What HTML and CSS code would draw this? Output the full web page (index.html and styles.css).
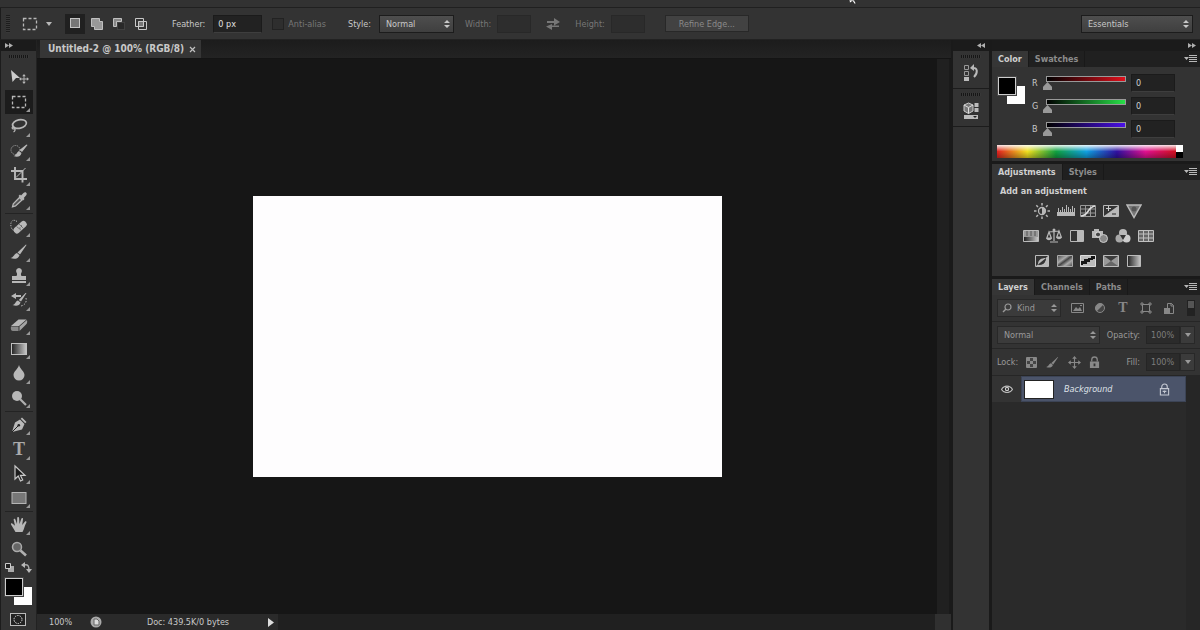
FILE: index.html
```html
<!DOCTYPE html>
<html lang="en">
<head>
<meta charset="utf-8">
<title>Untitled-2 @ 100% (RGB/8)</title>
<link rel="stylesheet" href="styles.css">
</head>
<body>
<svg class="defs" aria-hidden="true">
  <defs>
    <linearGradient id="fade" x1="0" y1="0" x2="1" y2="0"><stop offset="0" stop-color="#222"/><stop offset="1" stop-color="#c8c8c8"/></linearGradient>
    <linearGradient id="fadeDiag" x1="0" y1="0" x2="1" y2="1"><stop offset="0" stop-color="#444"/><stop offset=".35" stop-color="#aaa"/><stop offset=".5" stop-color="#444"/><stop offset=".7" stop-color="#aaa"/><stop offset="1" stop-color="#444"/></linearGradient>
    <symbol id="updown" viewBox="0 0 6 8"><path d="M3 0 6 3H0zM3 8 0 5h6z"/></symbol>
    <symbol id="menu" viewBox="0 0 13 8"><path d="M0 2h5L2.500 5zM5 0h8v1H5zM5 2h8v1H5zM5 4h8v1H5zM5 6h8v1H5z"/></symbol>
    <symbol id="right2" viewBox="0 0 8 5"><path d="M0 0 4 2.500 0 5zM4 0 8 2.500 4 5z"/></symbol>
    <symbol id="left2" viewBox="0 0 8 5"><path d="M4 0 0 2.500 4 5zM8 0 4 2.500 8 5z"/></symbol>
    <symbol id="down" viewBox="0 0 6 4"><path d="M0 0h6L3 4z"/></symbol>
    <symbol id="marquee" viewBox="0 0 20 20"><rect x="3.500" y="4.500" width="13" height="11" fill="none" stroke="currentColor" stroke-width="1.300" stroke-dasharray="3 2"/></symbol>
    <symbol id="brush" viewBox="0 0 20 20"><path d="M17.500 3 11 12.500 8.500 10.500 17 2.500zM8 11l2.500 2.200C9.500 17 5 17.500 1.500 16 5 15.500 5 11.500 8 11z"/></symbol>
    <symbol id="fourway" viewBox="0 0 14 14"><path d="M7 0 9.500 3H7.600v3.400H11V4.500L14 7l-3 2.500V7.600H7.600V11h1.900L7 14 4.500 11h1.900V7.600H3v1.900L0 7l3-2.500v1.900h3.400V3H4.500z"/></symbol>
    <symbol id="lock" viewBox="0 0 12 14"><path d="M3 6V4a3 3 0 0 1 6 0v2" fill="none" stroke="currentColor" stroke-width="1.400"/><path d="M1 6h10v7H1zM5 8v3h2V8z" fill-rule="evenodd"/></symbol>
  </defs>
</svg>

<div class="menubar"></div>
<svg class="cursor" viewBox="0 0 9 4" aria-hidden="true"><path d="M1 0h5l2 3.500-1.500.5L4.500 1 2 3z" fill="#fff" stroke="#111" stroke-width=".5"/></svg>

<header class="options">
  <span class="grip"></span>
  <button class="preset" aria-label="Rectangular marquee tool"><svg width="20" height="20"><use href="#marquee"/></svg><svg width="6" height="4"><use href="#down"/></svg></button>
  <div class="modes">
    <button class="mode active" aria-label="New selection"><svg width="14" height="14" viewBox="0 0 14 14"><rect x="2.500" y="1.500" width="9" height="9" fill="#777" stroke="#c4c4c4"/></svg></button>
    <button class="mode" aria-label="Add to selection"><svg width="14" height="14" viewBox="0 0 14 14"><path d="M1.500 1.500h8v3h3v8h-8v-3h-3z" fill="#999" stroke="#c0c0c0"/></svg></button>
    <button class="mode" aria-label="Subtract from selection"><svg width="14" height="14" viewBox="0 0 14 14"><path d="M1.500 1.500h8v3h-5v5h-3z" fill="#888" stroke="#c0c0c0"/><rect x="5.500" y="5.500" width="7" height="7" fill="#292929" stroke="#555" stroke-dasharray="1 1"/></svg></button>
    <button class="mode" aria-label="Intersect with selection"><svg width="14" height="14" viewBox="0 0 14 14"><path d="M4 4h6v6H4z" fill="#777"/><path d="M1.500 1.500h8v8h-8zM4.500 4.500h8v8h-8z" fill="none" stroke="#c8c8c8"/></svg></button>
  </div>
  <label class="field feather">Feather: <input class="box" type="text" value="0 px"></label>
  <label class="check"><input type="checkbox" disabled> Anti-alias</label>
  <label class="field style">Style:
    <span class="drop"><select><option>Normal</option></select><svg width="6" height="8"><use href="#updown"/></svg></span></label>
  <label class="field dim width">Width: <input class="box small" type="text" disabled></label>
  <button class="swap" aria-label="Swap width and height"><svg width="14" height="12" viewBox="0 0 14 12"><path d="M1 3h7V0l6 4-6 3.500V5H1zM13 9H6v3L0 8.500 6 6v1.500h7z"/></svg></button>
  <label class="field dim height">Height: <input class="box small" type="text" disabled></label>
  <button class="refine">Refine Edge...</button>
  <span class="drop workspace-drop"><select aria-label="Workspace"><option>Essentials</option></select><svg width="6" height="8"><use href="#updown"/></svg></span>
</header>

<main class="workspace">
  <aside class="toolbox">
    <div class="rail-head start"><svg width="8" height="5"><use href="#right2"/></svg></div>
    <span class="dots"></span>
    <div class="tools six">
      <button class="tool solo" aria-label="Move"><svg viewBox="0 0 20 20"><path d="M2 3 11 11H7L3.500 15z" fill="#ccc"/><svg x="10" y="7" width="10" height="10"><use href="#fourway"/></svg></svg></button>
      <button class="tool active" aria-label="Rectangular marquee"><svg viewBox="0 0 20 20"><use href="#marquee"/></svg></button>
      <button class="tool" aria-label="Lasso"><svg viewBox="0 0 20 20"><g fill="none" stroke="currentColor" stroke-width="1.700"><ellipse cx="10.500" cy="8" rx="7" ry="4.300" transform="rotate(-12 10.500 8)"/><path d="M5 10.500c-3 .5-2 3 .5 2.200M5.500 12c1.500 2 0 3.500-1 4" stroke-width="1.300"/></g></svg></button>
      <button class="tool" aria-label="Quick selection"><svg viewBox="0 0 20 20"><circle cx="6.500" cy="9" r="4.500" fill="none" stroke="currentColor" stroke-dasharray="1 1.200"/><path d="M18.500 4 13 11l-2.500-2 7-5.500zM10 10l2.500 2C11.500 16 8 16.500 4.500 15c3-.5 3-4 5.500-5z"/></svg></button>
      <button class="tool" aria-label="Crop"><svg viewBox="0 0 20 20"><path d="M6 2v12h12M2 6h11.500v11.500" fill="none" stroke="currentColor" stroke-width="1.900"/><path d="M16.500 3 7 12.500" stroke="currentColor" stroke-width="1"/></svg></button>
      <button class="tool" aria-label="Eyedropper"><svg viewBox="0 0 20 20"><path d="M12 5.500 14.500 3c2-2 4.500.5 2.500 2.500L14.800 8l.7 1-1.500 1.500L9.500 6 11 4.500z"/><path d="m10.500 7.500 2.500 2.500-6.500 6-3 .8.800-3z" fill="#555" stroke="currentColor" stroke-width="1.300"/></svg></button>
    </div>
    <div class="tools eight">
      <button class="tool" aria-label="Healing brush"><svg viewBox="0 0 20 20"><path d="M8 4.500c-4-3-7 0-6 5 .5 3 2.500 4 4 5" fill="none" stroke="currentColor" stroke-dasharray="1.200 1.200"/><rect x="3.500" y="7" width="15" height="6.500" rx="2.500" transform="rotate(-42 11 10)"/><path d="m7.500 9.500 5 4M10 7l4.500 4.500" stroke="#666" stroke-width=".8"/><path d="M10.500 10.500h1v1h-1zM12 8.500h1v1h-1z" fill="#444"/></svg></button>
      <button class="tool" aria-label="Brush"><svg viewBox="0 0 20 20"><use href="#brush"/></svg></button>
      <button class="tool" aria-label="Clone stamp"><svg viewBox="0 0 20 20"><path d="M10 2a3 3 0 0 1 2.500 4.500C11.500 8 12 9 12.500 10H17v4H3v-4h4.500C8 9 8.500 8 7.500 6.500A3 3 0 0 1 10 2zM3 15h14v2H3z"/></svg></button>
      <button class="tool" aria-label="History brush"><svg viewBox="0 0 20 20"><path d="M17.500 3 12 11.500 9.800 10 16.500 3zM9 10.500l2.500 2C10.500 16 7 16.500 3.500 15c3-.5 3-4 5.500-4.500zM2 6l5-3v2h5v2H7v2z"/><path d="M17 8c1 4-1 7-5 8" fill="none" stroke="currentColor" stroke-dasharray="1.500 1.500"/></svg></button>
      <button class="tool" aria-label="Eraser"><svg viewBox="0 0 20 20"><path d="M2 11 9.500 4.500h8L10 11z" fill="#b7b7b7"/><path d="M2 11.500h7.500V16H4c-2 0-2.500-2-2-4.500z" fill="#888"/><path d="m10.500 11.500 7.500-6.500c.5 2 0 3.500-1 4.500L10.500 16z" fill="#a4a4a4"/></svg></button>
      <button class="tool" aria-label="Gradient"><svg viewBox="0 0 20 20"><rect x="2.500" y="4.500" width="15" height="11" fill="url(#fade)" stroke="#c0c0c0"/></svg></button>
      <button class="tool" aria-label="Blur"><svg viewBox="0 0 20 20"><path d="M10 2c1 4 5.500 6.500 5.500 10a5.500 5.500 0 0 1-11 0C4.500 8.500 9 6 10 2z"/></svg></button>
      <button class="tool" aria-label="Dodge"><svg viewBox="0 0 20 20"><circle cx="8" cy="8" r="5"/><path d="m11 11 6 6" stroke="#b0b0b0" stroke-width="2.200"/></svg></button>
    </div>
    <div class="tools four">
      <button class="tool" aria-label="Pen"><svg viewBox="0 0 20 20"><path d="m13 2.500 4.500 4.500-1.300 1.300-4.500-4.500zM11 4.500 15.500 9 13 14.500 3 17l3-9.500z"/><path d="m3 17 6-6" stroke="#222"/><circle cx="9.800" cy="10.200" r="1.300" fill="#222"/></svg></button>
      <button class="tool glyph" aria-label="Type">T</button>
      <button class="tool" aria-label="Path selection"><svg viewBox="0 0 20 20"><path d="M6 2v13l3.200-3 2.300 5 2.200-1-2.300-4.700H16z" fill="#1c1c1c" stroke="#c8c8c8" stroke-width="1.200"/></svg></button>
      <button class="tool" aria-label="Rectangle"><svg viewBox="0 0 20 20"><rect x="3" y="4.500" width="14" height="11" fill="#777" stroke="#b5b5b5"/></svg></button>
    </div>
    <div class="tools two">
      <button class="tool" aria-label="Hand"><svg viewBox="0 0 20 20"><path d="M6.500 17 2 9.500c-.5-1.500 1-1.700 1.700-.7l2.300 2L4.700 5c-.3-1.600 1.400-1.800 1.800-.3L8 9 8.200 3c0-1.500 1.800-1.500 1.900 0L10.500 9l1.800-5.300c.5-1.300 2-.8 1.700.6L13.200 10l2.600-3.300c.9-1 2.200-.2 1.500 1.100C15 12 15.500 14 13.500 17z"/></svg></button>
      <button class="tool solo" aria-label="Zoom"><svg viewBox="0 0 20 20"><circle cx="8" cy="8" r="4.500" fill="#666" stroke="#aaa" stroke-width="1.500"/><path d="m11.500 11.500 5.500 5" stroke="#b0b0b0" stroke-width="2.600"/></svg></button>
    </div>
    <div class="minis">
      <button class="bare" aria-label="Default colors"><svg width="11" height="11" viewBox="0 0 11 11"><path d="M4 4h6v6H4z" fill="#aaa"/><path d="M1.500 1.500h5v5h-5z" fill="#222" stroke="#ccc"/></svg></button>
      <button class="bare" aria-label="Swap colors"><svg width="11" height="11" viewBox="0 0 11 11"><path d="M3 3c4-1 5 1 5 5" fill="none" stroke="#aaa" stroke-width="1.500"/><path d="M0 3 4 0v6zM5 7h6l-3 4z"/></svg></button>
    </div>
    <div class="chips"><button class="chip fore" aria-label="Foreground color"></button><button class="chip back" aria-label="Background color"></button></div>
    <button class="bare mask" aria-label="Quick mask"><svg width="16" height="13" viewBox="0 0 16 13"><rect x=".5" y=".5" width="15" height="12" fill="#222" stroke="#bbb"/><circle cx="8" cy="6.500" r="4" fill="none" stroke="#ddd" stroke-dasharray="1.500 1"/></svg></button>
  </aside>

  <section class="document">
    <div class="doc-tabs"><div class="doc-tab">Untitled-2 @ 100% (RGB/8) <button class="bare" aria-label="Close"><svg width="7" height="7" viewBox="0 0 7 7"><path d="m1 1 5 5M6 1 1 6" stroke="#c0c0c0" stroke-width="1.200"/></svg></button></div></div>
    <div class="stage"><div class="pasteboard"><div class="artboard"></div></div><div class="scroll-v"></div></div>
    <footer class="status">
      <span class="zoom">100%</span>
      <svg class="disc" width="12" height="12" viewBox="0 0 12 12"><circle cx="6" cy="6" r="5.500" fill="#aaa"/><path d="M4 3h3l2 2v4H4z" fill="#ddd" stroke="#666"/></svg>
      <span class="info">Doc: 439.5K/0 bytes</span>
      <button class="bare" aria-label="Status options"><svg width="6" height="9" viewBox="0 0 6 9"><path d="M0 0 6 4.500 0 9z" fill="#ddd"/></svg></button>
      <span class="scroll-h"></span><span class="corner"></span>
    </footer>
  </section>

  <aside class="icon-dock">
    <div class="rail-head end"><svg width="8" height="5"><use href="#left2"/></svg></div>
    <div class="dock-group"><span class="dots"></span><button class="bare" aria-label="History"><svg width="16" height="18" viewBox="0 0 16 18"><path d="M1.500 1.500h4v4h-4zM1.500 7.500h4v4h-4z" fill="none" stroke="#999"/><path d="M1 13h5v4H1z" fill="#bbb"/><path d="M9 4c6-1 6 5 2 9" fill="none" stroke="#bbb" stroke-width="2"/><path d="m7 4 4-4v7z"/></svg></button></div>
    <div class="dock-group"><span class="dots"></span><button class="bare" aria-label="Properties"><svg width="16" height="18" viewBox="0 0 16 18"><path d="m5.500 1 4.500 2v6l-4.500 2.500L1 9V3z" fill="#777" stroke="#ccc"/><path d="m1 3 4.500 2.500L10 3M5.500 5.500v6" fill="none" stroke="#ddd"/><path d="M11.500 1h4v4h-4zM11.500 6h4v4h-4zM1 13h14v4H1z" fill="#bbb"/><path d="M10 14h4l-2 2z" fill="#222"/></svg></button></div>
  </aside>

  <aside class="panels">
    <div class="rail-head end"><svg width="8" height="5"><use href="#right2"/></svg></div>

    <section class="panel color">
      <div class="tabs"><button class="tab on">Color</button><button class="tab">Swatches</button><button class="bare more" aria-label="Panel menu"><svg width="13" height="8"><use href="#menu"/></svg></button></div>
      <div class="color-body">
        <div class="chips"><button class="chip fore" aria-label="Foreground"></button><button class="chip back" aria-label="Background"></button></div>
        <div class="channels">
          <div class="channel"><label for="r">R</label><input class="slider red" id="r" type="range" value="0"><input class="box" type="text" value="0" aria-label="Red value"></div>
          <div class="channel"><label for="g">G</label><input class="slider green" id="g" type="range" value="0"><input class="box" type="text" value="0" aria-label="Green value"></div>
          <div class="channel"><label for="b">B</label><input class="slider blue" id="b" type="range" value="0"><input class="box" type="text" value="0" aria-label="Blue value"></div>
        </div>
      </div>
      <div class="ramp"><span class="spectrum"></span><span class="ends"></span></div>
    </section>

    <section class="panel adjustments">
      <div class="tabs"><button class="tab on">Adjustments</button><button class="tab">Styles</button><button class="bare more" aria-label="Panel menu"><svg width="13" height="8"><use href="#menu"/></svg></button></div>
      <h2>Add an adjustment</h2>
      <div class="adj-row">
        <button class="bare" aria-label="Brightness/Contrast"><svg viewBox="0 0 16 16"><circle cx="8" cy="8" r="3.500" fill="#333" stroke="currentColor" stroke-width="1.300"/><path d="M8 4.500a3.500 3.500 0 0 1 0 7z"/><path d="M8 0v2.500M8 13.500V16M0 8h2.500M13.500 8H16M2.300 2.300 4 4M12 12l1.700 1.700M2.300 13.700 4 12M12 4l1.700-1.700" stroke="currentColor" stroke-width="1.500"/></svg></button>
        <button class="bare" aria-label="Levels"><svg class="wide" viewBox="0 0 18 16"><path d="M0 9h18v4H0z"/><path d="M1.500 9V5M3.500 9V7M5.500 9V4M7.500 9V6M9.500 9V2M11.500 9V4M13.500 9V6M15.500 9V3M17.500 9V5" stroke="currentColor"/></svg></button>
        <button class="bare" aria-label="Curves"><svg viewBox="0 0 16 16"><g fill="none" stroke="currentColor"><path d="M.5 2.500h15v11H.5zM.5 6h15M.5 10h15M5.500 2v11M10.500 2v11" stroke="#999"/><path d="M1 13C9 13 7 4 15 3" stroke="#ddd" stroke-width="1.600"/></g></svg></button>
        <button class="bare" aria-label="Exposure"><svg viewBox="0 0 16 16"><path d="M.5 2.500h15v11H.5z" fill="#333" stroke="currentColor"/><path d="M15 3v10H1z"/><path d="M3 5.500h5M5.500 3v5" stroke="#ccc"/><path d="M9 11h4" stroke="#222"/></svg></button>
        <button class="bare" aria-label="Vibrance"><svg viewBox="0 0 16 16"><path d="M1 2h14L8 14.500z" fill="#777" stroke="#bbb" stroke-width="1.400"/><circle cx="8" cy="6" r="2.500" fill="#555"/></svg></button>
      </div>
      <div class="adj-row">
        <button class="bare" aria-label="Hue/Saturation"><svg viewBox="0 0 16 16"><path d="M.5 2.500h15v11H.5z" fill="#999" stroke="#bbb"/><path d="M4 3v5M8 3v5M12 3v5" stroke="#555"/><path d="M1 9h14v4H1z" fill="url(#fade)"/></svg></button>
        <button class="bare" aria-label="Color balance"><svg viewBox="0 0 16 16"><path d="M8 1v12M4 14h8M3 4l10-1M3 4 .800 10h4.500zM13 3l-2.200 6h4.500z" fill="none" stroke="currentColor" stroke-width="1.200"/><path d="M0 10h6c-1 3-5 3-6 0zM10 9h6c-1 3-5 3-6 0z"/><circle cx="8" cy="2" r="1.500"/></svg></button>
        <button class="bare" aria-label="Black and white"><svg viewBox="0 0 16 16"><path d="M1.500 2.500h13v11h-13z" fill="#333" stroke="currentColor"/><path d="M8 3h6v10H8z"/></svg></button>
        <button class="bare" aria-label="Photo filter"><svg viewBox="0 0 16 16"><path d="M0 3h2V1h5v2h4v7H0z"/><circle cx="6" cy="6.500" r="2.500" fill="#444" stroke="#ddd"/><circle cx="11.500" cy="10.500" r="4" fill="#888" stroke="#ccc"/></svg></button>
        <button class="bare" aria-label="Channel mixer"><svg viewBox="0 0 16 16"><circle cx="8" cy="5" r="4"/><circle cx="4.500" cy="10.500" r="4" fill="#a8a8a8"/><circle cx="11.500" cy="10.500" r="4" fill="#ccc"/><path d="M5 7h6l-3 5z" fill="#333"/></svg></button>
        <button class="bare" aria-label="Color lookup"><svg viewBox="0 0 16 16"><path d="M.5 2.500h15v11H.5z" fill="#666"/><path d="M.5 2.500h15v11H.5zM.5 6h15M.5 10h15M5.500 2v11M10.500 2v11" fill="none" stroke="#c0c0c0"/></svg></button>
      </div>
      <div class="adj-row">
        <button class="bare" aria-label="Invert"><svg viewBox="0 0 16 16"><path d="M1.500 2.500h13v11h-13z" fill="#333" stroke="#bbb"/><path d="M2 13 14 3v10z"/><path d="M4 11.500c0-4.500 3-6.500 8-6.500-.5 5-3.500 7.500-8 6.500z" fill="#333"/><path d="M8 8.200 12 5c-.5 5-3.500 7.500-8 6.500z" fill="#333"/><path d="M8 8.200 12 5c-5 0-8 2-8 6.500z" fill="#bbb"/></svg></button>
        <button class="bare" aria-label="Posterize"><svg viewBox="0 0 16 16"><path d="M.5 2.500h15v11H.5z" fill="url(#fadeDiag)" stroke="#aaa"/></svg></button>
        <button class="bare" aria-label="Threshold"><svg viewBox="0 0 16 16"><path d="M.5 2.500h15v11H.5z" fill="#bbb" stroke="#ddd"/><path d="M1 8h3V6h4V5h3V3h4v3h-2v1h-3v2H7v2H3v1H1z" fill="#151515"/></svg></button>
        <button class="bare" aria-label="Selective color"><svg viewBox="0 0 16 16"><path d="M.5 2.500h15v11H.5z" fill="#999" stroke="#bbb"/><path d="m1 3 7 5 7-5z" fill="#3c3c3c"/><path d="m1 13 7-5 7 5z" fill="#666"/></svg></button>
        <button class="bare" aria-label="Gradient map"><svg viewBox="0 0 16 16"><path d="M1.500 2.500h13v11h-13z" fill="url(#fade)" stroke="#bbb"/></svg></button>
      </div>
    </section>

    <section class="panel layers">
      <div class="tabs"><button class="tab on">Layers</button><button class="tab">Channels</button><button class="tab">Paths</button><button class="bare more" aria-label="Panel menu"><svg width="13" height="8"><use href="#menu"/></svg></button></div>
      <div class="row filters">
        <span class="drop kind"><svg class="lens" width="10" height="10" viewBox="0 0 10 10"><circle cx="6" cy="4" r="3" fill="none" stroke="currentColor" stroke-width="1.200"/><path d="M4 6 1 9" stroke="currentColor" stroke-width="1.400"/></svg><select aria-label="Filter kind"><option>Kind</option></select><svg width="6" height="8"><use href="#updown"/></svg></span>
        <button class="bare" aria-label="Pixel layers"><svg width="13" height="12" viewBox="0 0 13 12"><path d="M.5 1.500h12v9H.5z" fill="none" stroke="currentColor"/><path d="m2 9 3-4 2 2 2-2 2 4zM9 3h2v1H9z"/></svg></button>
        <button class="bare" aria-label="Adjustment layers"><svg width="12" height="12" viewBox="0 0 12 12"><circle cx="6" cy="6" r="4.500" fill="#444" stroke="currentColor"/><path d="M2.500 9.500A5 5 0 0 1 9.500 2.500z"/></svg></button>
        <button class="bare letter" aria-label="Type layers">T</button>
        <button class="bare" aria-label="Shape layers"><svg width="12" height="12" viewBox="0 0 12 12"><path d="M2.500 2.500h7v7h-7zM1 1h2v2H1zM9 1h2v2H9zM1 9h2v2H1zM9 9h2v2H9z" fill="#333" stroke="currentColor"/></svg></button>
        <button class="bare" aria-label="Smart objects"><svg width="12" height="13" viewBox="0 0 12 13"><path d="M4.500 6V1.500h4l2 2v8h-4" fill="none" stroke="currentColor"/><path d="M1 6h6v6H1z"/><path d="M8 1v3h3" fill="none" stroke="currentColor"/></svg></button>
        <button class="switch" aria-label="Toggle filtering"></button>
      </div>
      <div class="row blending">
        <span class="drop blend"><select aria-label="Blend mode"><option>Normal</option></select><svg width="6" height="8"><use href="#updown"/></svg></span>
        <div class="percent"><label for="opacity">Opacity:</label><input class="box" id="opacity" type="text" value="100%"><button class="step" aria-label="Opacity slider"><svg width="6" height="4"><use href="#down"/></svg></button></div>
      </div>
      <div class="row locks">
        <span>Lock:</span>
        <button class="bare" aria-label="Lock transparency"><svg width="11" height="11" viewBox="0 0 11 11"><path d="M.5.500h10v10H.5z" fill="#444" stroke="currentColor"/><path d="M1 1h3v3H1zM7 1h3v3H7zM4 4h3v3H4zM1 7h3v3H1zM7 7h3v3H7z"/></svg></button>
        <button class="bare" aria-label="Lock pixels"><svg width="15" height="15"><use href="#brush"/></svg></button>
        <button class="bare" aria-label="Lock position"><svg width="13" height="13"><use href="#fourway"/></svg></button>
        <button class="bare" aria-label="Lock all"><svg width="11" height="13"><use href="#lock"/></svg></button>
        <div class="percent"><label for="fill">Fill:</label><input class="box" id="fill" type="text" value="100%"><button class="step" aria-label="Fill slider"><svg width="6" height="4"><use href="#down"/></svg></button></div>
      </div>
      <div class="layer-list">
        <div class="layer">
          <button class="bare eye" aria-label="Layer visibility"><svg width="12" height="8" viewBox="0 0 12 8"><path d="M.5 4.500C3 0 9 0 11.500 4.500 9 8.500 3 8.500.500 4.500z" fill="#222" stroke="#bbb" stroke-width="1.200"/><circle cx="6" cy="4" r="2.200" fill="#ccc"/><circle cx="6" cy="4" r="1" fill="#222"/></svg></button>
          <div class="layer-main"><span class="thumb"></span><span class="name">Background</span><svg width="11" height="13" viewBox="0 0 12 14"><path d="M3 6V4a3 3 0 0 1 6 0v2M1.500 6h9v7h-9zM6 8v3M4 9h4" fill="none" stroke="#c4c8d2" stroke-width="1.200"/></svg></div>
        </div>
        <div class="layer-scroll"></div>
      </div>
    </section>
  </aside>
</main>
</body>
</html>
```
FILE: styles.css
```css
* { box-sizing: border-box; }

body {
  margin: 0;
  height: 100vh;
  display: flex;
  flex-direction: column;
  overflow: hidden;
  background: #161616;
  color: #c8c8c8;
  font: 9px/14px "DejaVu Sans Condensed", "Open Sans", "DejaVu Sans", sans-serif;
}

button, input, select {
  margin: 0;
  padding: 0;
  border: 0;
  border-radius: 0;
  background: none;
  color: inherit;
  font: inherit;
}

svg { display: block; fill: currentColor; flex: none; }
.defs { position: absolute; width: 0; height: 0; }
.cursor { position: absolute; top: 0; left: 848px; width: 9px; height: 4px; }

.bare { display: grid; place-items: center; color: #b8b8b8; }

.menubar { height: 8px; flex: none; background: #323232; border-bottom: 1px solid #202020; }

/* Options bar */
.options {
  height: 32px;
  flex: none;
  display: flex;
  align-items: center;
  padding: 0 7px 0 5px;
  background: #333;
  border-left: 1px solid #1c1c1c;
  border-bottom: 1px solid #222;
}
.grip { width: 4px; height: 18px; background: repeating-linear-gradient(#1d1d1d 0 1px, #383838 1px 2px); }
.preset { display: flex; align-items: center; gap: 6px; margin-left: 10px; color: #b8b8b8; }
.modes { display: flex; gap: 2px; margin-left: 13px; }
.mode { width: 20px; height: 20px; display: grid; place-items: center; }
.mode.active { background: #202020; }
.field, .check { display: flex; align-items: center; }
.box {
  height: 18px;
  padding: 0 4px;
  background: #222;
  border: 1px solid #1b1b1b;
  border-bottom-color: #3e3e3e;
}
.feather { gap: 8px; margin-left: 21px; }
.feather .box { width: 49px; color: #e0e0e0; }
.check { gap: 4px; margin-left: 10px; color: #777; }
.check input { appearance: none; width: 12px; height: 12px; background: #2e2e2e; border: 1px solid #222; }
.style { gap: 8px; margin-left: 22px; }

.drop { display: inline-grid; grid-template-columns: 1fr auto; align-items: center; }
.drop select {
  grid-area: 1 / 1 / 2 / 3;
  width: 100%;
  height: 18px;
  padding: 0 6px;
  appearance: none;
  background: linear-gradient(#4e4e4e, #3f3f3f);
  border: 1px solid #1c1c1c;
}
.drop > svg:last-child { grid-area: 1 / 2; margin-right: 4px; pointer-events: none; }
.style .drop { width: 75px; }
.workspace-drop { width: 112px; margin-left: auto; }

.dim { color: #777; }
.dim .small { width: 34px; background: #2d2d2d; border-color: #282828; }
.width { gap: 6px; margin-left: 11px; }
.swap { margin: 0 15px; color: #777; }
.height { gap: 6px; }
.refine {
  width: 84px;
  height: 17px;
  margin-left: 20px;
  color: #8a8a8a;
  background: #424242;
  border: 1px solid #282828;
}

.workspace { flex: 1; min-height: 0; display: flex; }

.rail-head {
  height: 11px;
  flex: none;
  display: flex;
  align-items: center;
  padding: 0 4px;
  background: #1b1b1b;
  color: #b0b0b0;
}
.rail-head.end { justify-content: flex-end; }
.dots { display: block; width: 20px; height: 3px; background: repeating-linear-gradient(90deg, #161616 0 1px, #383838 1px 2px); }

/* Toolbox */
.toolbox {
  width: 37px;
  flex: none;
  display: flex;
  flex-direction: column;
  background: #333;
  border-left: 1px solid #1c1c1c;
  border-right: 1px solid #222;
}
.toolbox > .dots { margin: 4px 8px 7px; }
.tools { display: grid; grid-auto-rows: 1fr; flex: none; margin: 0 3px 0 4px; }
.tools + .tools { margin-top: 1px; padding-top: 1px; border-top: 1px solid #232323; }
.six { height: 147px; }
.eight { height: 197px; }
.four { height: 99px; }
.two { height: 50px; }
.tool { display: grid; place-items: center; position: relative; color: #b8b8b8; }
.tool svg { width: 20px; height: 20px; }
.tool svg svg { width: 10px; height: 10px; }
.tool::after {
  content: "";
  position: absolute;
  right: 3px;
  bottom: 2px;
  border: 2px solid;
  border-color: transparent #999 #999 transparent;
}
.tool.solo::after { display: none; }
.tool.active { background: #1c1c1c; }
.glyph { font: 18px/20px "Liberation Serif", serif; font-weight: bold; color: #aaa; }
.minis { display: flex; gap: 6px; margin: 1px 3px 5px; }
.chips { display: flex; }
.chip { width: 18px; height: 18px; flex: none; }
.chip.fore { z-index: 1; background: #000; border: 1px solid #ccc; outline: 1px solid #444; }
.chip.back { margin: 9px 0 0 -9px; background: #fff; }
.toolbox .chips { margin-left: 4px; }
.mask { align-self: flex-start; margin: 8px 0 0 9px; }

/* Document */
.document { flex: 1; min-width: 0; display: flex; flex-direction: column; }
.doc-tabs { height: 19px; flex: none; display: flex; padding-left: 3px; background: linear-gradient(#1c1c1c, #232323); border-bottom: 1px solid #141414; }
.doc-tab { display: flex; align-items: center; gap: 5px; padding: 0 5px 0 8px; background: #363636; font-size: 10px; font-weight: bold; }
.stage { flex: 1; min-height: 0; display: flex; }
.pasteboard { flex: 1; display: grid; place-items: center; background: #161616; }
.artboard { width: 469px; height: 281px; background: #fefdfe; }
.scroll-v { width: 14px; background: #202020; border-right: 2px solid #1a1a1a; }
.status { height: 16px; flex: none; display: flex; align-items: center; padding-left: 3px; background: #2a2a2a; }
.zoom { width: 50px; padding-left: 9px; }
.info { width: 160px; margin-left: 6px; text-align: center; }
.scroll-h { flex: 1; align-self: stretch; margin-left: 4px; background: #202020; }
.corner { width: 16px; align-self: stretch; background: #303030; }

/* Icon dock */
.icon-dock { width: 38px; flex: none; display: flex; flex-direction: column; background: #333; border-left: 2px solid #1a1a1a; }
.dock-group { height: 38px; display: flex; flex-direction: column; align-items: center; gap: 6px; padding-top: 4px; border-bottom: 1px solid #1c1c1c; }

/* Panels */
.panels { width: 211px; flex: none; display: flex; flex-direction: column; background: #333; border-left: 3px solid #1a1a1a; }
.panel { border-bottom: 3px solid #1a1a1a; }
.tabs { height: 16px; display: flex; background: #202020; }
.tab { padding: 0 6px; color: #8c8c8c; font-weight: bold; border-right: 1px solid #191919; }
.tab.on { background: #363636; color: #d0d0d0; }
.more { margin: 0 3px 0 auto; }

.color { height: 113px; }
.color-body { display: flex; padding: 7px 25px 0 6px; }
.color-body .chips { margin: 3px 7px 0 0; }
.channels { flex: 1; min-width: 0; display: grid; grid-template-columns: minmax(0, 1fr); gap: 5px; }
.channel { display: flex; align-items: center; }
.channel label { width: 14px; }
.channel .box { width: 44px; margin-left: 5px; color: #d0d0d0; }
.slider { appearance: none; flex: 1; min-width: 0; height: 10px; align-self: flex-start; background: none; }
.slider::-webkit-slider-runnable-track { height: 6px; border: 1px solid #999; background: linear-gradient(90deg, #000, var(--hue)); }
.slider::-webkit-slider-thumb {
  appearance: none;
  width: 9px;
  height: 8px;
  margin: 5px 0 0 -4px;
  background: #999;
  clip-path: polygon(50% 0, 100% 60%, 100% 100%, 0 100%, 0 60%);
}
.red { --hue: #e0101c; }
.green { --hue: #28e048; }
.blue { --hue: #4a10e8; }
.ramp { display: flex; height: 13px; margin: 7px 17px 0 5px; }
.spectrum {
  flex: 1;
  background:
    linear-gradient(rgba(255,255,255,.9), rgba(255,255,255,0) 50%, rgba(0,0,0,.3)),
    linear-gradient(90deg, #e02020, #f0e020 17%, #10a040 33%, #10a0e0 50%, #3010a0 67%, #e01090 83%, #d01020);
}
.ends { width: 7px; background: linear-gradient(#fff 50%, #000 50%); }

.adjustments { height: 115px; }
.adjustments h2 { margin: 4px 8px 0; font: inherit; font-weight: bold; color: #d0d0d0; }
.adj-row { height: 25px; display: flex; justify-content: center; align-items: center; gap: 7px; padding-right: 16px; }
.adj-row .bare { width: 16px; }
.adj-row svg { width: 16px; height: 16px; }
.adj-row .wide { width: 18px; }

.layers { flex: 1; min-height: 0; display: flex; flex-direction: column; border: 0; color: #999; }
.layers .tabs { flex: none; }
.row { height: 27px; flex: none; display: flex; align-items: center; padding: 0 5px; border-bottom: 1px solid #262626; }
.row .bare { color: #888; }
.row .drop select { background: #3b3b3b; border-color: #282828; }
.row .box { background: #2b2b2b; border-color: #252525; color: #7d7d7d; }
.filters { gap: 7px; }
.filters .bare { width: 16px; }
.kind { width: 64px; margin-right: 1px; }
.kind .lens { grid-area: 1 / 1; z-index: 1; margin-left: 5px; }
.kind select { padding-left: 19px; }
.filters .letter { font: 14px/14px "Liberation Serif", serif; font-weight: bold; }
.switch { width: 8px; height: 16px; background: linear-gradient(#555 50%, #222 50%); border: 1px solid #222; margin-left: auto; }
.blending { justify-content: space-between; }
.blend { width: 103px; }
.percent { display: flex; align-items: center; }
.percent .box { width: 34px; margin-left: 6px; }
.step { width: 15px; height: 18px; display: grid; place-items: center; background: #3b3b3b; border: 1px solid #282828; }
.locks { gap: 8px; }
.locks .percent { margin-left: auto; }
.layer-list { flex: 1; display: flex; background: #2a2a2a; }
.layer { flex: 1; height: 26px; display: flex; background: #333; }
.eye { width: 29px; }
.layer-main { flex: 1; display: flex; align-items: center; padding: 0 15px 0 2px; background: #4b546a; border: 1px solid #3c4456; }
.thumb { width: 30px; height: 19px; background: #fff; border: 1px solid #222; }
.name { flex: 1; margin-left: 10px; font-style: italic; color: #dfe2e8; }
.layer-scroll { width: 14px; background: #262626; }
```
